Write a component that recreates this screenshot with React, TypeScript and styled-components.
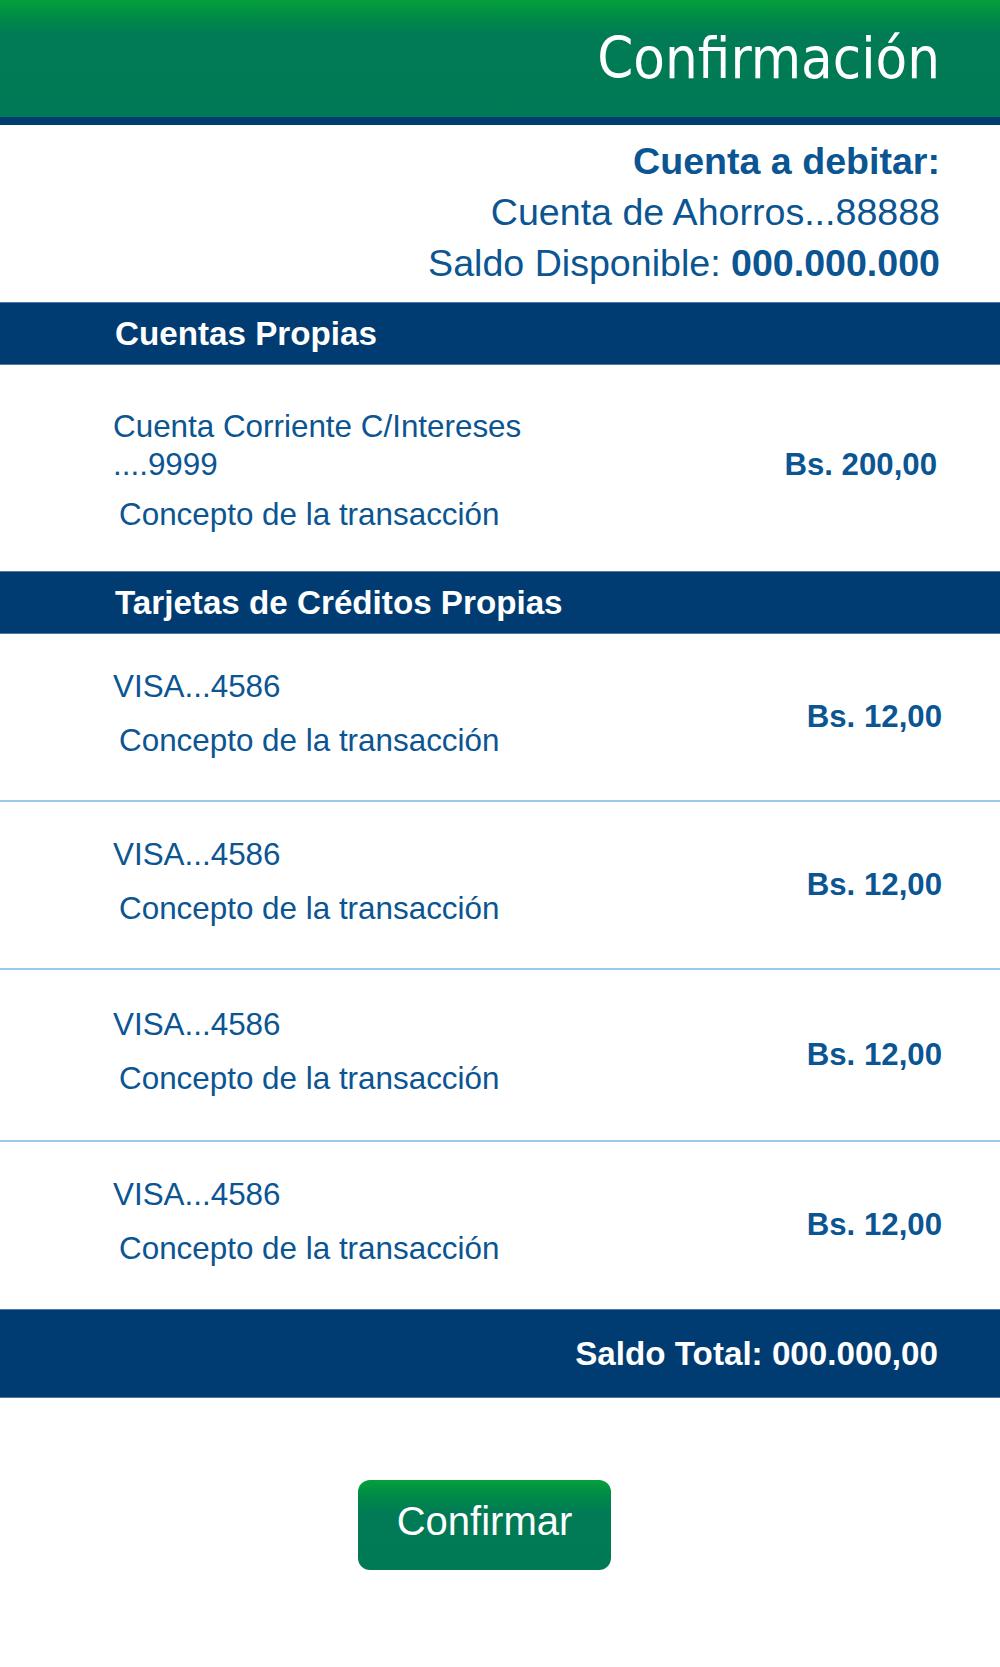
import React from "react";
import styled, { createGlobalStyle } from "styled-components";

const GlobalStyle = createGlobalStyle`
  html, body { margin: 0; padding: 0; background: #ffffff; }
  body { font-family: "Liberation Sans", Arial, sans-serif; }
  * { box-sizing: border-box; }
`;

const Page = styled.div`
  width: 1000px;
  min-height: 1667px;
  background: #ffffff;
  display: flex;
  flex-direction: column;
  color: #0b5592;
`;

const Header = styled.header`
  height: 125px;
  display: flex;
  align-items: center;
  justify-content: flex-end;
  padding: 0 60px 8px 0;
  background:
    linear-gradient(#003c71, #003c71) bottom / 100% 8px no-repeat,
    linear-gradient(180deg, #04a03a 0px, #008a48 18px, #007b55 34px, #007a56 117px);
`;

const Title = styled.h1`
  margin: 0;
  font-family: "DejaVu Sans Condensed", "DejaVu Sans", sans-serif;
  font-stretch: condensed;
  font-weight: 400;
  font-size: 57.5px;
  line-height: 1;
  color: #ffffff;
`;

const DebitInfo = styled.section`
  display: flex;
  flex-direction: column;
  align-items: flex-end;
  padding: 11px 60px 13px 0;
  font-size: 37.6px;
  line-height: 51px;
`;

const DebitLine = styled.div<{ $bold?: boolean }>`
  font-weight: ${(p) => (p.$bold ? 700 : 400)};
  white-space: nowrap;
`;

const Strong = styled.strong`
  font-weight: 700;
`;

const Bar = styled.div<{ $height: number; $align?: "start" | "end" }>`
  height: ${(p) => p.$height}px;
  background: #003c71;
  border-top: 1px solid #4f7aa3;
  border-bottom: 1px solid #4f7aa3;
  display: flex;
  align-items: center;
  justify-content: ${(p) => (p.$align === "end" ? "flex-end" : "flex-start")};
  padding: ${(p) => (p.$align === "end" ? "0 62px 0 0" : "0 0 0 115px")};
  color: #ffffff;
  font-weight: 700;
  font-size: 33.2px;
  white-space: nowrap;
`;

const Item = styled.div<{ $height: number; $padRight: number; $shift: number; $divider?: boolean }>`
  height: ${(p) => p.$height}px;
  display: flex;
  align-items: center;
  justify-content: space-between;
  padding: ${(p) => (p.$shift > 0 ? p.$shift : 0)}px ${(p) => p.$padRight}px
    ${(p) => (p.$shift < 0 ? -p.$shift : 0)}px 113px;
  border-bottom: ${(p) => (p.$divider ? "2px solid #9cc9ea" : "none")};
`;

const ItemText = styled.div`
  display: flex;
  flex-direction: column;
  font-size: 31.4px;
`;

const AccountName = styled.div<{ $lineHeight: number }>`
  line-height: ${(p) => p.$lineHeight}px;
  white-space: nowrap;
`;

const Concept = styled.div<{ $gap: number }>`
  margin-top: ${(p) => p.$gap}px;
  padding-left: 6px;
  line-height: 36px;
  white-space: nowrap;
`;

const Amount = styled.div<{ $offset?: number }>`
  font-size: 31.2px;
  font-weight: 700;
  white-space: nowrap;
  margin-top: ${(p) => ((p.$offset ?? 0) > 0 ? p.$offset : 0)}px;
  margin-bottom: ${(p) => ((p.$offset ?? 0) < 0 ? -(p.$offset ?? 0) : 0)}px;
`;

const ButtonRow = styled.div`
  display: flex;
  justify-content: center;
  padding: 82px 31px 0 0;
`;

const ConfirmButton = styled.button`
  width: 253px;
  height: 90px;
  border: none;
  border-radius: 12px;
  background: linear-gradient(180deg, #05a03a 0px, #008a48 16px, #007b55 32px, #007a56 90px);
  color: #ffffff;
  font-family: "Liberation Sans", Arial, sans-serif;
  font-size: 40px;
  padding: 0 0 8px 0;
  cursor: pointer;
`;

const cards = [
  { height: 168, divider: true },
  { height: 168, divider: true },
  { height: 172, divider: true },
  { height: 167, divider: false },
];

export default function App() {
  return (
    <>
      <GlobalStyle />
      <Page>
        <Header>
          <Title>Confirmación</Title>
        </Header>
        <DebitInfo>
          <DebitLine $bold>Cuenta a debitar:</DebitLine>
          <DebitLine>Cuenta de Ahorros...88888</DebitLine>
          <DebitLine>
            Saldo Disponible: <Strong>000.000.000</Strong>
          </DebitLine>
        </DebitInfo>

        <Bar $height={63}>Cuentas Propias</Bar>
        <Item $height={206} $padRight={63} $shift={4}>
          <ItemText>
            <AccountName $lineHeight={38}>
              Cuenta Corriente C/Intereses
              <br />
              ....9999
            </AccountName>
            <Concept $gap={13}>Concepto de la transacción</Concept>
          </ItemText>
          <Amount $offset={-11}>Bs. 200,00</Amount>
        </Item>

        <Bar $height={63}>Tarjetas de Créditos Propias</Bar>
        {cards.map((c, i) => (
          <Item key={i} $height={c.height} $padRight={58} $shift={-7} $divider={c.divider}>
            <ItemText>
              <AccountName $lineHeight={36}>VISA...4586</AccountName>
              <Concept $gap={18}>Concepto de la transacción</Concept>
            </ItemText>
            <Amount $offset={6}>Bs. 12,00</Amount>
          </Item>
        ))}

        <Bar $height={89} $align="end">
          Saldo Total: 000.000,00
        </Bar>

        <ButtonRow>
          <ConfirmButton>Confirmar</ConfirmButton>
        </ButtonRow>
      </Page>
    </>
  );
}
